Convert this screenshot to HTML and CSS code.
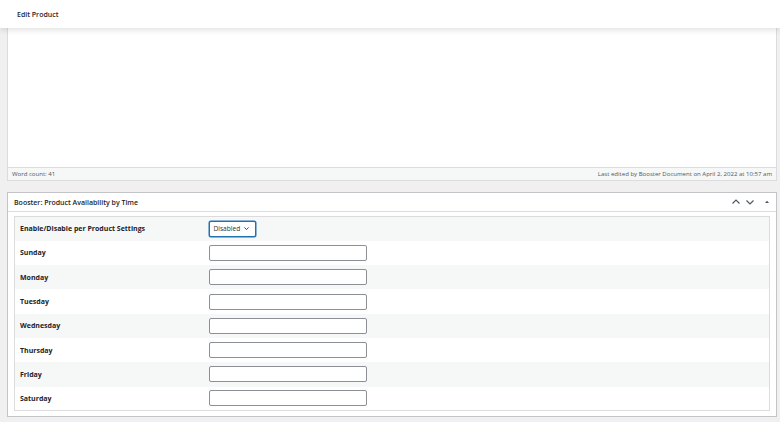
FILE: index.html
```html
<!DOCTYPE html>
<html>
<head>
<meta charset="utf-8">
<link rel="stylesheet" href="styles.css">
</head>
<body>
<header class="topbar"><h1 class="title">Edit Product</h1></header>
<main class="wrap">
  <section class="editor">
    <div class="editor-body"></div>
    <div class="status">
      <span>Word count: 41</span>
      <span>Last edited by Booster Document on April 2, 2022 at 10:57 am</span>
    </div>
  </section>
  <section class="metabox">
    <div class="mb-head">
      <h2 class="mb-title">Booster: Product Availability by Time</h2>
      <div class="mb-actions">
        <svg class="ic" viewBox="0 0 10 10" width="10" height="10"><path d="M1.5 6.5 L5 3 L8.5 6.5" fill="none" stroke="#50575e" stroke-width="1.2"/></svg>
        <svg class="ic" viewBox="0 0 10 10" width="10" height="10"><path d="M1.5 3.5 L5 7 L8.5 3.5" fill="none" stroke="#50575e" stroke-width="1.2"/></svg>
        <svg class="ic tri" viewBox="0 0 10 10" width="10" height="10"><path d="M3 6 L5 3.8 L7 6 Z" fill="#50575e"/></svg>
      </div>
    </div>
    <div class="mb-inner">
      <table class="form">
        <tr><th>Enable/Disable per Product Settings</th><td><span class="select">Disabled <svg viewBox="0 0 10 10" width="7" height="7"><path d="M2 3.5 L5 6.5 L8 3.5" fill="none" stroke="#2c3338" stroke-width="1.3"/></svg></span></td></tr>
        <tr><th>Sunday</th><td><span class="input"></span></td></tr>
        <tr><th>Monday</th><td><span class="input"></span></td></tr>
        <tr><th>Tuesday</th><td><span class="input"></span></td></tr>
        <tr><th>Wednesday</th><td><span class="input"></span></td></tr>
        <tr><th>Thursday</th><td><span class="input"></span></td></tr>
        <tr><th>Friday</th><td><span class="input"></span></td></tr>
        <tr><th>Saturday</th><td><span class="input"></span></td></tr>
      </table>
    </div>
  </section>
</main>
</body>
</html>
```
FILE: styles.css
```css
* { box-sizing: border-box; }
body {
  margin: 0;
  background: #f0f0f1;
  font-family: "Open Sans", "Noto Sans", sans-serif;
  color: #1d2327;
  width: 780px;
  height: 422px;
  overflow: hidden;
}
.topbar {
  position: relative;
  z-index: 2;
  height: 28px;
  background: #fff;
  box-shadow: 0 2px 6px rgba(0,0,0,0.12);
  display: flex;
  align-items: center;
  padding-left: 17px;
}
.title {
  margin: 0;
  font-size: 7px;
  font-weight: 600;
  color: #1d2327;
}
.wrap {
  padding: 0 3px 0 7px;
}
.editor {
  border: 1px solid #dcdcde;
  border-top: none;
  background: #fff;
}
.editor-body {
  height: 139px;
}
.status {
  height: 13px;
  background: #f6f7f7;
  border-top: 1px solid #dcdcde;
  display: flex;
  justify-content: space-between;
  align-items: center;
  padding: 0 4px 0 4px;
  font-size: 6.05px;
  color: #50575e;
}
.metabox {
  margin-top: 11px;
  border: 1px solid #c3c4c7;
  background: #fff;
}
.mb-head {
  height: 19px;
  border-bottom: 1px solid #dcdcde;
  display: flex;
  align-items: center;
  justify-content: space-between;
  padding: 0 4px 0 6px;
}
.mb-title {
  margin: 0;
  font-size: 7px;
  font-weight: 600;
  color: #1d2327;
}
.mb-actions {
  display: flex;
  align-items: center;
  gap: 4px;
}
.ic { display: block; }
.tri { margin-left: 3px; }
.mb-inner {
  padding: 4px 6px 5px 6px;
}
.form {
  width: 100%;
  border: 1px solid #dcdcde;
  border-collapse: collapse;
}
.form tr { height: 24.3px; }
.form tr:nth-child(odd) { background: #f6f7f7; }
.form th {
  width: 194px;
  text-align: left;
  padding: 0 0 0 5px;
  font-size: 7px;
  font-weight: 700;
  color: #1d2327;
  line-height: 1;
}
.form td { padding: 0; line-height: 1; }
.input {
  display: block;
  width: 158px;
  height: 16px;
  border: 1px solid #8c8f94;
  border-radius: 2px;
  background: #fff;
}
.select {
  display: flex;
  align-items: center;
  gap: 3px;
  height: 16px;
  width: 47px;
  padding-left: 4px;
  border: 1px solid #2271b1;
  box-shadow: 0 0 0 0.5px #2271b1;
  border-radius: 2px;
  background: #fff;
  font-size: 6.6px;
  color: #2c3338;
}
.select svg { display: block; }
```
